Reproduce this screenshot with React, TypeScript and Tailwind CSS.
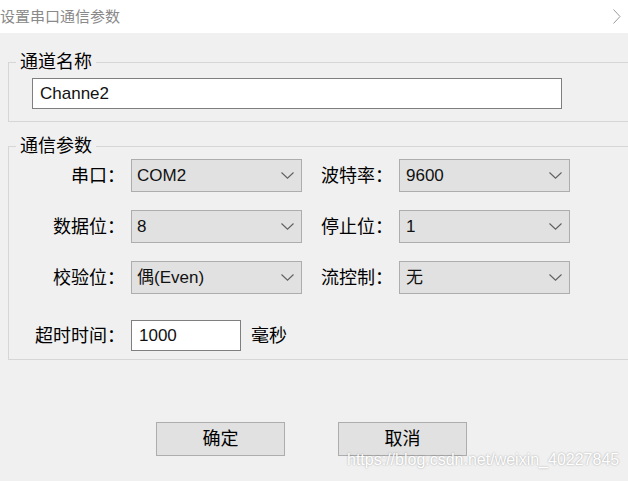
import React from "react";

const font = "font-['Liberation_Sans','Noto_Sans_CJK_SC',sans-serif]";

const Select: React.FC<{ value: string; pl?: string }> = ({ value, pl = "pl-[5px]" }) => (
  <div
    className={`flex h-[33px] w-[171px] items-center justify-between border border-[#adadad] bg-[#e1e1e1] ${pl} pr-[7px]`}
  >
    <span className="text-[17px] leading-none text-[#111]">{value}</span>
    <svg width="13" height="7" viewBox="0 0 13 7">
      <path d="M0.5 0.5 L6.5 6.2 L12.5 0.5" stroke="#606060" strokeWidth="1.1" fill="none" />
    </svg>
  </div>
);

const rows = [
  { l: "串口：", lv: "COM2", r: "波特率：", rv: "9600" },
  { l: "数据位：", lv: "8", r: "停止位：", rv: "1" },
  { l: "校验位：", lv: "偶(Even)", r: "流控制：", rv: "无" },
];

export default function App() {
  return (
    <div className={`relative flex h-[481px] w-[628px] flex-col overflow-hidden bg-[#f0f0f0] ${font} text-black`}>
      {/* title bar */}
      <div className="flex h-[33px] items-center justify-between bg-white pr-[7px]">
        <span className="text-[15px] leading-none text-[#8a8a8a]">设置串口通信参数</span>
        <svg width="8" height="15" viewBox="0 0 8 15">
          <path d="M0.5 0.5 L7 7.5 L0.5 14.5" stroke="#9a9a9a" strokeWidth="1" fill="none" />
        </svg>
      </div>

      {/* channel name */}
      <fieldset className="ml-[8px] mt-[19px] border-y border-l border-[#d6d6d6]">
        <legend className="ml-[7px] px-[4px] text-[18px] leading-[20px]">通道名称</legend>
        <div className="pb-[12px] pl-[23px] pt-[6px]">
          <div className="flex h-[31px] w-[530px] items-center border border-[#7f7f7f] bg-white pl-[7px]">
            <span className="text-[17px] leading-none text-[#111]">Channe2</span>
          </div>
        </div>
      </fieldset>

      {/* comm params */}
      <fieldset className="ml-[8px] mt-[14px] border-y border-l border-[#d6d6d6]">
        <legend className="ml-[7px] px-[4px] text-[18px] leading-[20px]">通信参数</legend>
        <div className="flex flex-col pb-[8px] pt-[3px]">
          <div className="flex flex-col gap-[18px]">
            {rows.map((row) => (
              <div key={row.l} className="flex items-center">
                <span className="w-[116px] text-right text-[18px] leading-none">{row.l}</span>
                <div className="ml-[6px]">
                  <Select value={row.lv} />
                </div>
                <span className="ml-[19px] w-[72px] text-[18px] leading-none">{row.r}</span>
                <div className="ml-[6px]">
                  <Select value={row.rv} pl="pl-[6px]" />
                </div>
              </div>
            ))}
          </div>
          <div className="mt-[26px] flex items-center">
            <span className="w-[116px] text-right text-[18px] leading-none">超时时间：</span>
            <div className="ml-[6px] flex h-[31px] w-[110px] items-center border border-[#7f7f7f] bg-white pl-[7px]">
              <span className="text-[17px] leading-none text-[#111]">1000</span>
            </div>
            <span className="ml-[10px] text-[18px] leading-none">毫秒</span>
          </div>
        </div>
      </fieldset>

      {/* buttons */}
      <div className="ml-[156px] mt-[62px] flex gap-[53px]">
        <button className="flex h-[34px] w-[129px] items-center justify-center border border-[#adadad] bg-[#e1e1e1] text-[18px] leading-none">
          确定
        </button>
        <button className="flex h-[34px] w-[129px] items-center justify-center border border-[#adadad] bg-[#e1e1e1] text-[18px] leading-none">
          取消
        </button>
      </div>

      {/* watermark */}
      <span className="absolute left-[347px] top-[452px] font-['Liberation_Sans',sans-serif] text-[16px] leading-none text-white [text-shadow:0_0_2px_rgba(0,0,0,0.35)]">
        https://blog.csdn.net/weixin_40227845
      </span>
    </div>
  );
}
